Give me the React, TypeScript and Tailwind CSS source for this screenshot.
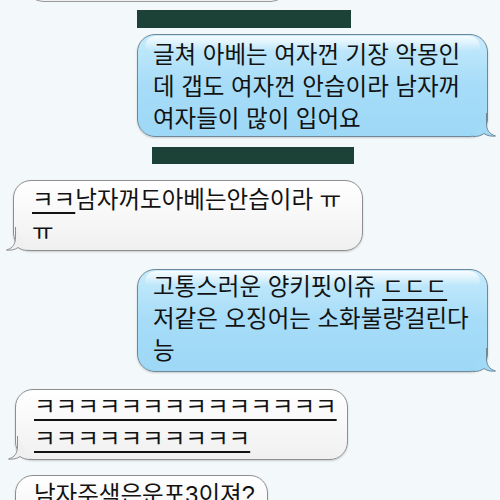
import * as React from "react";

// iOS-style SMS thread (old skeuomorphic bubbles)

function BlueTail() {
  return (
    <svg className="absolute right-[-10px] bottom-[-1px]" width="24" height="24" viewBox="0 0 24 24" aria-hidden="true">
      <path
        d="M13.5 0 V10 C13.5 17 16 21 22.5 23 C18.5 23.6 14 22.8 11 20.5 C8.5 22.5 5 23.5 0 23.5"
        fill="#a0daf7"
        stroke="#6f8797"
        strokeWidth="1"
      />
    </svg>
  );
}

function GrayTail() {
  return (
    <svg className="absolute left-[-9px] bottom-[-1px]" width="24" height="24" viewBox="0 0 24 24" aria-hidden="true">
      <path
        d="M10.5 0 V10 C10.5 17 8 21 1.5 23 C5.5 23.6 10 22.8 13 20.5 C15.5 22.5 19 23.5 24 23.5"
        fill="#f0f0f0"
        stroke="#8e8e8e"
        strokeWidth="1"
      />
    </svg>
  );
}

function Sent({ className, children }: { className: string; children: React.ReactNode }) {
  return (
    <div
      className={`relative ml-[137px] w-[351px] rounded-[18px] border border-[#6f8797] bg-linear-to-b from-[#c6ebfc] via-[#a6dcf8] to-[#9dd8f6] shadow-[0_1px_2px_rgba(0,0,0,0.18)] ${className}`}
    >
      <div className="absolute top-[1px] left-[7px] right-[7px] h-[15px] rounded-t-[14px] rounded-b-[6px] bg-linear-to-b from-white/85 to-white/0" />
      <BlueTail />
      <div className="relative pl-[15px] text-[23.5px] leading-[32px] text-[#121212] whitespace-nowrap">{children}</div>
    </div>
  );
}

function Received({ className, children }: { className: string; children: React.ReactNode }) {
  return (
    <div
      className={`relative rounded-[18px] border border-[#8e8e8e] bg-linear-to-b from-white to-[#f0f0f0] shadow-[0_1px_2px_rgba(0,0,0,0.18)] ${className}`}
    >
      <GrayTail />
      <div className="relative pl-[18px] text-[23.5px] leading-[32px] text-[#121212] whitespace-nowrap">{children}</div>
    </div>
  );
}

const ul = "underline decoration-2 underline-offset-[4px]";

export default function App() {
  return (
    <div className="w-[500px] h-[500px] overflow-hidden bg-[#f3f8fb] flex flex-col [font-family:'Liberation_Sans','Noto_Sans_CJK_KR',sans-serif]">
      {/* bottom of the previous bubble */}
      <div className="shrink-0 mt-[-19px] ml-[27px] w-[260px] h-[21px] rounded-b-[16px] border border-[#9a9a9a] bg-[#f1f1f1]" />

      <div className="shrink-0 mt-[8px] ml-[137px] w-[214px] h-[18px] bg-[#1c4136]" />

      <Sent className="shrink-0 mt-[6px] h-[103px] pt-[4px]">
        <div>글쳐 아베는 여자껀 기장 악몽인</div>
        <div>데 갭도 여자껀 안습이라 남자꺼</div>
        <div>여자들이 많이 입어요</div>
      </Sent>

      <div className="shrink-0 mt-[10px] ml-[152px] w-[202px] h-[17px] bg-[#1c4136]" />

      <Received className="shrink-0 mt-[16px] ml-[13px] w-[350px] h-[71px] pt-[3px]">
        <div>
          <span className={ul}>ㅋㅋ</span>남자꺼도아베는안습이라 ㅠ
        </div>
        <div>ㅠ</div>
      </Received>

      <Sent className="shrink-0 mt-[18px] h-[103px] pt-[1px]">
        <div>
          고통스러운 양키핏이쥬 <span className={ul}>ㄷㄷㄷ</span>
        </div>
        <div>저같은 오징어는 소화불량걸린다</div>
        <div>능</div>
      </Sent>

      <Received className="shrink-0 mt-[17px] ml-[15px] w-[333px] h-[71px] pt-[1px]">
        <div>
          <span className={ul}>ㅋㅋㅋㅋㅋㅋㅋㅋㅋㅋㅋㅋㅋㅋ</span>
        </div>
        <div>
          <span className={ul}>ㅋㅋㅋㅋㅋㅋㅋㅋㅋㅋ</span>
        </div>
      </Received>

      <Received className="shrink-0 mt-[15px] ml-[15px] w-[253px] h-[60px] pt-[3px]">
        <div>남자주색은운포3이져?</div>
      </Received>
    </div>
  );
}
